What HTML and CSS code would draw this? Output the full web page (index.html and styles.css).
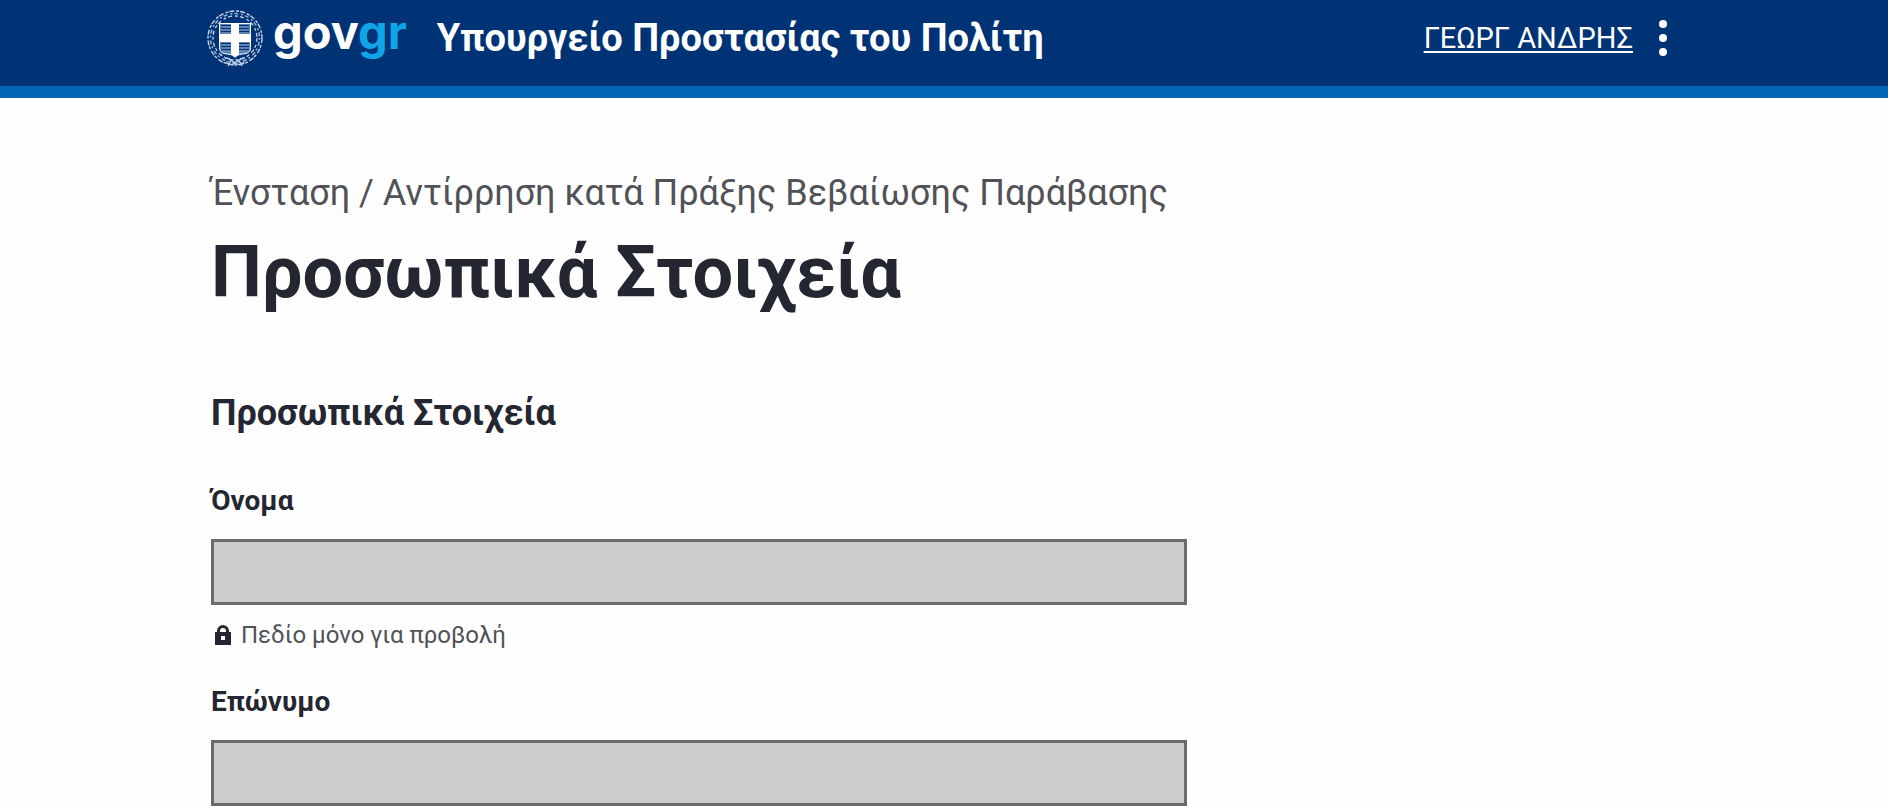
FILE: index.html
```
<!DOCTYPE html>
<html lang="el">
<head>
    <meta charset="UTF-8">
    <meta name="viewport" content="width=device-width, initial-scale=1.0">
    <title>Προσωπικά Στοιχεία</title>
    <link rel="stylesheet" href="styles.css">
</head>
<body>
    <header class="header">
        <div class="container header-content">
            <a class="logo" href="#" aria-label="gov.gr">
                <svg class="emblem" viewBox="0 0 58 58" fill="none">
                    <!-- Wreath -->
                    <g stroke="#c3d3ea">
                        <circle cx="29" cy="29" r="27" stroke-width="1.4" stroke-dasharray="5 2 3 1"/>
                        <circle cx="29" cy="29" r="24.5" stroke-width="1.6" stroke-dasharray="2 2 4 3" stroke-opacity=".75"/>
                        <circle cx="29" cy="29" r="22" stroke-width="1.3" stroke-dasharray="4 3 3 2"/>
                        <path d="M20 49c4 0 6 3 9 5s6 2 9-1M38 49c-4 0-6 3-9 5s-6 2-9-1M25 51l-3 6M33 51l3 6" stroke-width="1.3"/>
                    </g>
                    <!-- Shield -->
                    <path d="M13.500 14.500h31v24c0 5-3 6-8 6.500-4 .5-6 1.500-7.500 3.500-1.500-2-3.500-3-7.500-3.500-5-.5-8-1.500-8-6.500z" fill="#5f83b5" stroke="#fff"/>
                    <path d="M15 16.500h28M15 19.500h28M15 22.500h28M15 34.500h28M15 37.500h28M15 40.500h28" stroke="#003375" stroke-width="1.200"/>
                    <path d="M25 15h8v10h11v8H33v12l-4 3-4-3V33H14v-8h11z" fill="#fff"/>
                </svg>
                <span class="logo-text">gov<span class="logo-gr">gr</span></span>
            </a>
            <span class="service-name">Υπουργείο Προστασίας του Πολίτη</span>
            <div class="user">
                <a class="user-name" href="#">ΓΕΩΡΓ ΑΝΔΡΗΣ</a>
                <button class="menu-button" type="button" aria-label="Μενού">
                    <svg width="8" height="36" viewBox="0 0 8 36" fill="#fff">
                        <circle cx="4" cy="4" r="4"/>
                        <circle cx="4" cy="18" r="4"/>
                        <circle cx="4" cy="32" r="4"/>
                    </svg>
                </button>
            </div>
        </div>
    </header>

    <main class="container main">
        <form class="form">
            <h1><span class="caption">Ένσταση / Αντίρρηση κατά Πράξης Βεβαίωσης Παράβασης</span>Προσωπικά Στοιχεία</h1>
            <h2>Προσωπικά Στοιχεία</h2>
            <div class="field">
                <label for="firstName">Όνομα</label>
                <input type="text" id="firstName" readonly>
                <p class="hint">
                    <svg class="lock" viewBox="0 0 16 20">
                        <path d="M0 7h2V6a6 6 0 0 1 12 0v1h2v13H0zM5 7h6V6a3 3 0 0 0-6 0zM6 11v4h4v-4z" fill="#242731" fill-rule="evenodd"/>
                    </svg>
                    Πεδίο μόνο για προβολή
                </p>
            </div>
            <div class="field">
                <label for="lastName">Επώνυμο</label>
                <input type="text" id="lastName" readonly>
            </div>
        </form>
    </main>
</body>
</html>
```
FILE: styles.css
```
* {
    box-sizing: border-box;
}
body {
    margin: 0;
    font-family: Roboto, "Noto Sans", sans-serif;
    background-color: #fefefe;
    color: #242731;
}
.container {
    max-width: 1530px;
    margin: 0 auto;
    padding: 0 32px;
}
.header {
    background-color: #003375;
    border-bottom: 12px solid #0065b3;
}
.header-content {
    display: flex;
    align-items: center;
    height: 86px;
    padding-bottom: 10px;
}
.logo {
    display: flex;
    align-items: center;
    gap: 9px;
    margin-left: -5px;
    color: #fff;
    text-decoration: none;
}
.emblem {
    width: 58px;
    height: 58px;
}
.logo-text {
    font-family: Inter, sans-serif;
    font-size: 47px;
    font-weight: 700;
    line-height: 56px;
    padding-bottom: 12px;
}
.logo-gr {
    color: #0ea5e9;
}
.service-name {
    margin-left: 30px;
    font-size: 38px;
    font-weight: 700;
    line-height: 48px;
    color: #fff;
}
.user {
    display: flex;
    align-items: center;
    gap: 16px;
    margin-left: auto;
}
.user-name {
    font-size: 29px;
    line-height: 36px;
    color: #fff;
    text-underline-offset: 3px;
}
.menu-button {
    display: flex;
    padding: 0 10px;
    border: none;
    background: none;
    cursor: pointer;
}
.main {
    padding-top: 71px;
}
.form {
    width: 66.6%;
}
h1 {
    margin: 0 0 72px;
    font-size: 72px;
    font-weight: 700;
    line-height: 88px;
}
.caption {
    display: block;
    margin-bottom: 12px;
    font-size: 36px;
    font-weight: 400;
    line-height: 48px;
    color: #515257;
}
h2 {
    margin: 0 0 46px;
    font-size: 36px;
    line-height: 48px;
}
.field {
    margin-bottom: 31px;
}
.field label {
    display: block;
    margin-bottom: 20px;
    font-size: 28px;
    font-weight: 700;
    line-height: 36px;
}
.field input {
    display: block;
    width: 100%;
    height: 66px;
    padding: 0 12px;
    border: 3px solid #6b6b6f;
    border-radius: 0;
    background-color: #cdcdcf;
    font: inherit;
    font-size: 28px;
    color: #242731;
}
.hint {
    display: flex;
    align-items: center;
    gap: 10px;
    margin: 12px 0 0;
    padding-left: 4px;
    font-size: 24px;
    line-height: 36px;
    color: #515257;
}
.lock {
    width: 16px;
    height: 20px;
}
```
